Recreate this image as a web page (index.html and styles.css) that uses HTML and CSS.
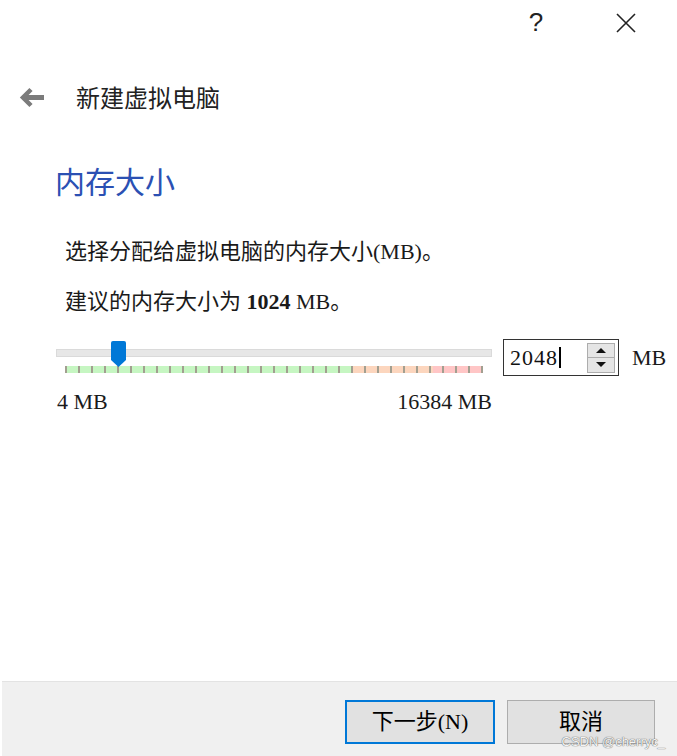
FILE: index.html
```html
<!DOCTYPE html>
<html lang="zh-CN">
<head>
  <meta charset="UTF-8">
  <title>新建虚拟电脑</title>
  <link rel="stylesheet" href="styles.css">
</head>
<body>

<div class="window">
  <div class="titlebar">
    <span class="titlebar-button help">?</span>
    <span class="titlebar-button">
      <svg width="20" height="20" viewBox="0 0 20 20">
        <path d="M1 1 L19 19 M19 1 L1 19" stroke="#222" stroke-width="1.6" fill="none"/>
      </svg>
    </span>
  </div>

  <div class="header">
    <svg class="back-arrow" width="26" height="21" viewBox="0 0 26 21">
      <path d="M5 10.5 H25" stroke="#7b7b7b" stroke-width="5" fill="none"/>
      <path d="M12 2.5 L4 10.5 L12 18.5" stroke="#7b7b7b" stroke-width="4.5" fill="none"/>
    </svg>
    <span class="header-title">新建虚拟电脑</span>
  </div>

  <div class="page">
    <h2 class="page-title">内存大小</h2>
    <p class="desc">选择分配给虚拟电脑的内存大小(MB)。</p>
    <p class="desc desc-second">建议的内存大小为 <b>1024</b> MB。</p>

    <div class="memory-row">
      <div class="slider">
        <div class="slider-track">
          <!-- 2048 of 4..16384 MB -->
          <svg class="slider-handle" style="left: 54px" width="15" height="26" viewBox="0 0 15 26">
            <path d="M2 0 H13 Q15 0 15 2 V19 L7.5 26 L0 19 V2 Q0 0 2 0 Z" fill="#0078d7"/>
          </svg>
        </div>
        <div class="slider-ticks"></div>
        <div class="slider-labels">
          <span>4 MB</span>
          <span>16384 MB</span>
        </div>
      </div>

      <div class="spinbox">
        <span class="spin-value">2048</span>
        <span class="caret"></span>
        <div class="spin-buttons">
          <div class="spin-button"><span class="arrow-up"></span></div>
          <div class="spin-button"><span class="arrow-down"></span></div>
        </div>
      </div>
      <span class="unit">MB</span>
    </div>
  </div>

  <div class="footer">
    <button class="btn btn-default">下一步(N)</button>
    <button class="btn">取消</button>
    <span class="watermark">CSDN @cherryc_</span>
  </div>
</div>

</body>
</html>
```

FILE: styles.css
```css
html, body {
  margin: 0;
  padding: 0;
  height: 100%;
}

body {
  background-color: #fff;
  color: #1a1a1a;
  font-family: "Liberation Serif", "Noto Sans CJK SC", serif;
}

.window {
  height: 100%;
  display: flex;
  flex-direction: column;
}

.titlebar {
  height: 45px;
  display: flex;
  justify-content: flex-end;
  align-items: center;
  gap: 44px;
  padding-right: 28px;
}

.titlebar-button {
  width: 46px;
  height: 45px;
  display: flex;
  justify-content: center;
  align-items: center;
}

.help {
  font-family: "Liberation Sans", sans-serif;
  font-size: 26px;
  line-height: 45px;
  color: #222;
}

.header {
  display: flex;
  align-items: center;
  height: 32px;
  margin-top: 36px;
  padding-left: 19px;
}

.back-arrow {
  margin-right: 31px;
}

.header-title {
  font-family: "Noto Sans CJK SC", sans-serif;
  font-size: 24px;
  line-height: 32px;
  color: #222;
}

.page {
  padding-left: 55px;
}

.page-title {
  margin: 47px 0 0 0;
  font-family: "Noto Sans CJK SC", sans-serif;
  font-size: 30px;
  font-weight: normal;
  line-height: 40px;
  color: #2b50b3;
}

.desc {
  margin: 37px 0 0 10px;
  font-size: 22px;
  line-height: 30px;
}

.desc-second {
  margin-top: 20px;
}

.desc b {
  font-weight: bold;
}

.memory-row {
  display: flex;
  align-items: flex-start;
  margin-top: 22px;
  margin-left: 1px;
}

.slider {
  width: 436px;
}

.slider-track {
  position: relative;
  height: 6px;
  margin-top: 10px;
  background-color: #e7e7e7;
  border: 1px solid #dadada;
}

.slider-handle {
  position: absolute;
  top: -9px;
}

.slider-ticks {
  width: 418px;
  height: 7px;
  margin: 9px 0 0 9px;
  background-image:
    repeating-linear-gradient(to right, #a29f90 0, #a29f90 2px, transparent 2px, transparent 13px),
    linear-gradient(to right, #c6f6c2 0, #c6f6c2 287px, #fcd6be 287px, #fcd6be 368px, #ffc6c6 368px);
}

.slider-labels {
  display: flex;
  justify-content: space-between;
  margin-top: 16px;
  padding-left: 1px;
  font-size: 22px;
  line-height: 26px;
}

.spinbox {
  width: 114px;
  height: 35px;
  margin-left: 11px;
  border: 1px solid #333;
  display: flex;
  align-items: center;
}

.spin-value {
  margin-left: 6px;
  font-size: 22px;
  letter-spacing: 1px;
  color: #111;
}

.caret {
  width: 2px;
  height: 21px;
  margin-left: 1px;
  background-color: #000;
}

.spin-buttons {
  margin-left: auto;
  margin-right: 3px;
  width: 28px;
  display: flex;
  flex-direction: column;
}

.spin-button {
  height: 13px;
  background-color: #e5e5e5;
  border: 1px solid #adadad;
  display: flex;
  justify-content: center;
  align-items: center;
}

.spin-button + .spin-button {
  border-top: none;
  height: 14px;
}

.arrow-up {
  width: 0;
  height: 0;
  border-left: 5px solid transparent;
  border-right: 5px solid transparent;
  border-bottom: 5px solid #111;
}

.arrow-down {
  width: 0;
  height: 0;
  border-left: 5px solid transparent;
  border-right: 5px solid transparent;
  border-top: 5px solid #111;
}

.unit {
  margin-left: 13px;
  font-size: 22px;
  line-height: 37px;
}

.footer {
  position: relative;
  margin-top: auto;
  margin-left: 2px;
  height: 56px;
  border-top: 1px solid #e3e3e3;
  background-color: #f0f0f0;
  display: flex;
  justify-content: flex-end;
  align-items: flex-start;
  gap: 12px;
  padding: 18px 22px 0 0;
}

.btn {
  width: 150px;
  height: 44px;
  background-color: #e1e1e1;
  border: 1px solid #adadad;
  color: #000;
  font-family: "Liberation Serif", "Noto Sans CJK SC", serif;
  font-size: 22px;
  line-height: 26px;
  padding: 0 0 1px 0;
  cursor: pointer;
}

.btn + .btn {
  width: 148px;
}

.btn-default {
  border: 2px solid #0078d7;
}

.watermark {
  position: absolute;
  right: 12px;
  bottom: 7px;
  font-family: "Liberation Sans", sans-serif;
  font-size: 13px;
  line-height: 15px;
  color: #f4f4f4;
  text-shadow: 0 0 1px #666, 0 0 1px #666;
}
```
